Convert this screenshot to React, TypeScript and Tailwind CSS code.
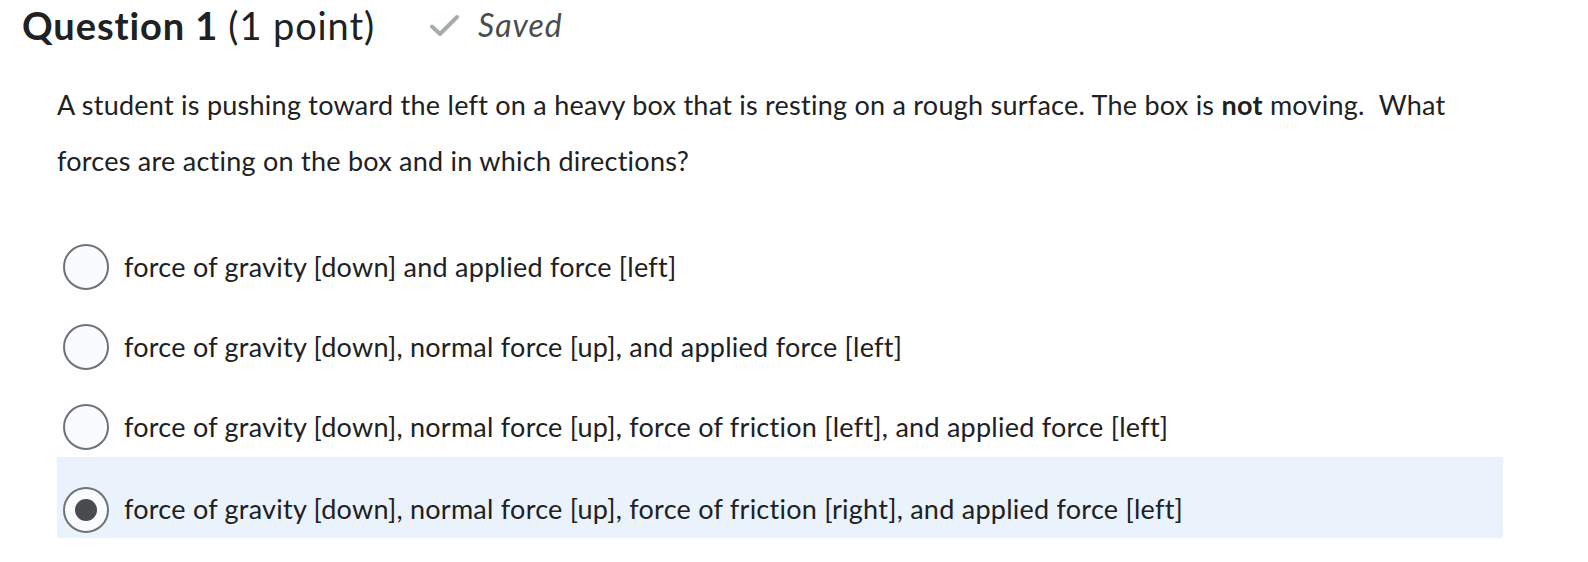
import React from 'react'

const OPTIONS = [
  'force of gravity [down] and applied force [left]',
  'force of gravity [down], normal force [up], and applied force [left]',
  'force of gravity [down], normal force [up], force of friction [left], and applied force [left]',
  'force of gravity [down], normal force [up], force of friction [right], and applied force [left]',
]

export default function App() {
  const selected = 3
  return (
    <div className="w-[1588px] h-[562px] bg-white text-[#202122] font-['Lato','Noto_Sans',sans-serif] [font-variant-ligatures:none] overflow-hidden">
      <div className="flex items-center h-[50px] pl-[22px]">
        <h2 className="text-[38px] tracking-[0.9px] font-bold leading-none">
          Question 1 <span className="font-normal">(1 point)</span>
        </h2>
        <div className="flex items-center ml-[54px] gap-[18px] text-[#494c4e]">
          <svg width="31" height="23" viewBox="0 0 31 23" fill="none">
            <path d="M3 12.5 L11 20 L28 3" stroke="#a6abae" strokeWidth="4" strokeLinecap="round" strokeLinejoin="round" />
          </svg>
          <span className="text-[32px] tracking-[1px] italic leading-none">Saved</span>
        </div>
      </div>

      <p className="mt-[27px] ml-[57px] w-[1420px] text-[27px] tracking-[0.25px] leading-[56px]">
        A student is pushing toward the left on a heavy box that is resting on a rough surface. The box is <b>not</b> moving.&nbsp; What forces are acting on the box and in which directions?
      </p>

      <div className="mt-[38px] ml-[57px] w-[1446px] flex flex-col">
        {OPTIONS.map((o, i) => (
          <label
            key={i}
            className={`flex items-center pl-[6px] gap-[15px] text-[27px] tracking-[0.25px] ${i === selected ? 'bg-[#eaf2fc] h-[81px] -mt-[10px] pt-[24px]' : 'h-[80px]'}`}
          >
            <span className="w-[46px] h-[46px] rounded-full border-2 border-[#6e7376] bg-[#f9fbff] flex items-center justify-center shrink-0">
              {i === selected && <span className="w-[22px] h-[22px] rounded-full bg-[#494c4e]" />}
            </span>
            <span>{o}</span>
          </label>
        ))}
      </div>
    </div>
  )
}
